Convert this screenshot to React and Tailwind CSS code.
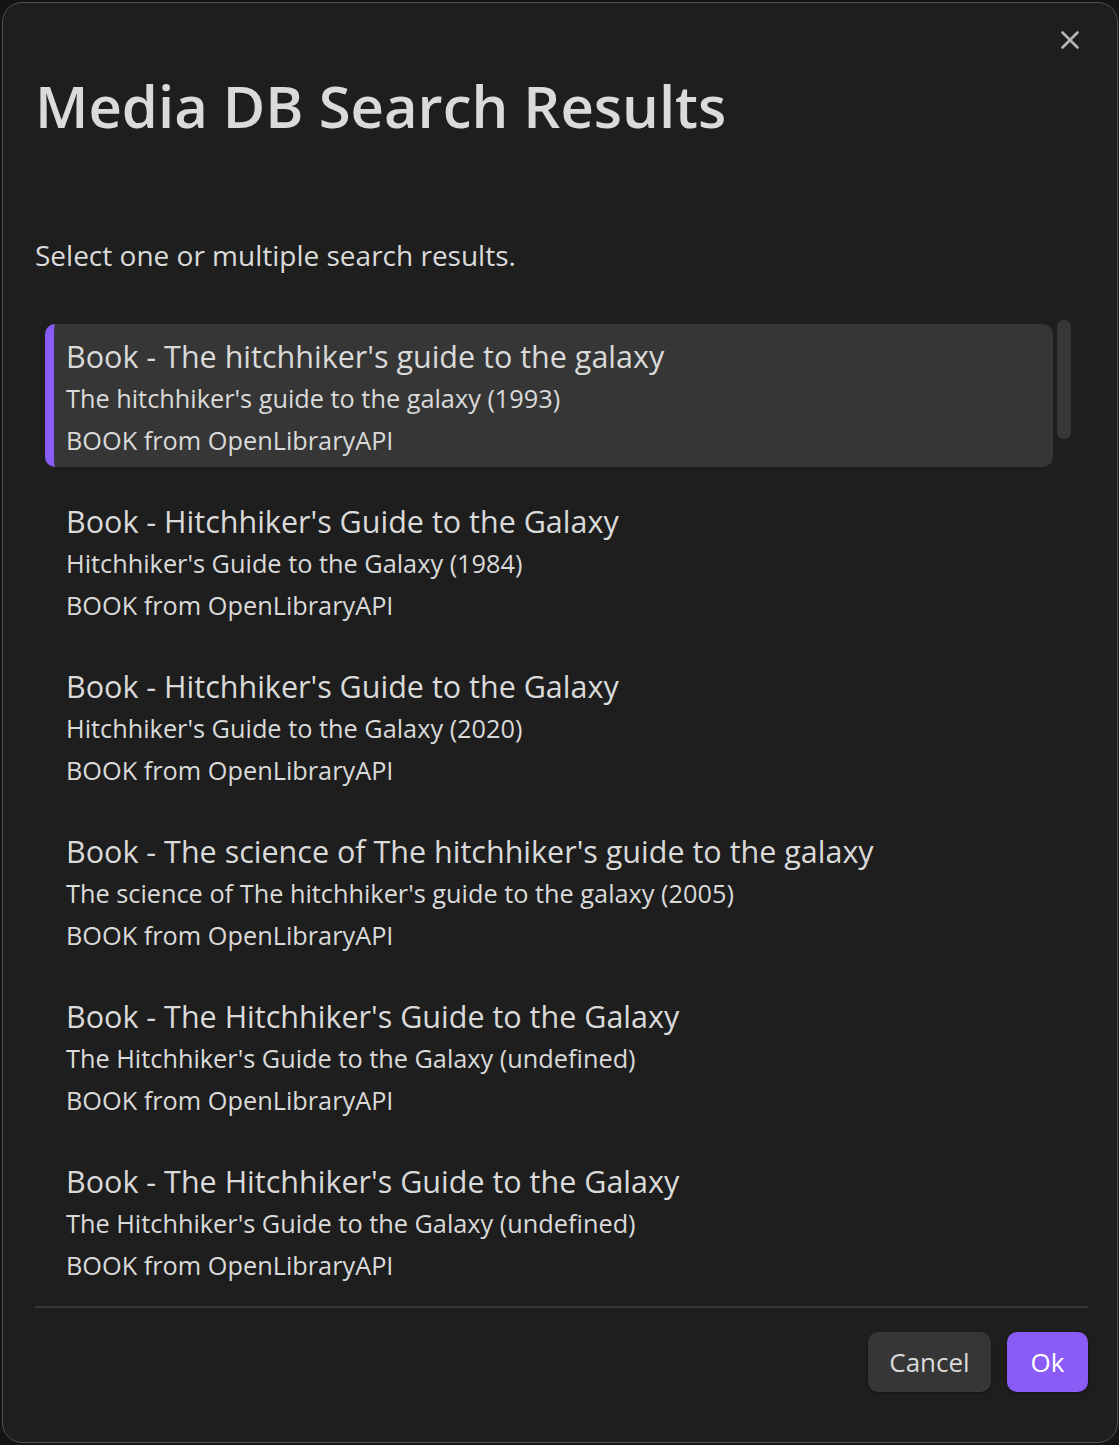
import { X } from "lucide-react";

const RESULTS = [
  {
    title: "Book - The hitchhiker's guide to the galaxy",
    sub: "The hitchhiker's guide to the galaxy (1993)",
    src: "BOOK from OpenLibraryAPI",
  },
  {
    title: "Book - Hitchhiker's Guide to the Galaxy",
    sub: "Hitchhiker's Guide to the Galaxy (1984)",
    src: "BOOK from OpenLibraryAPI",
  },
  {
    title: "Book - Hitchhiker's Guide to the Galaxy",
    sub: "Hitchhiker's Guide to the Galaxy (2020)",
    src: "BOOK from OpenLibraryAPI",
  },
  {
    title: "Book - The science of The hitchhiker's guide to the galaxy",
    sub: "The science of The hitchhiker's guide to the galaxy (2005)",
    src: "BOOK from OpenLibraryAPI",
  },
  {
    title: "Book - The Hitchhiker's Guide to the Galaxy",
    sub: "The Hitchhiker's Guide to the Galaxy (undefined)",
    src: "BOOK from OpenLibraryAPI",
  },
  {
    title: "Book - The Hitchhiker's Guide to the Galaxy",
    sub: "The Hitchhiker's Guide to the Galaxy (undefined)",
    src: "BOOK from OpenLibraryAPI",
  },
];

function ResultItem({ item, selected }) {
  return (
    <div
      className={`flex h-[143px] shrink-0 flex-col justify-center rounded-[10px] pt-[4px] ${
        selected ? "border-l-[9px] border-[#8a5cf5] bg-[#363636] pl-[12px]" : "pl-[21px]"
      }`}
    >
      <div className="text-[30.5px] leading-[42px] text-[#dadada]">{item.title}</div>
      <div className="text-[25.3px] leading-[42px] text-[#dadada]">{item.sub}</div>
      <div className="text-[25.3px] leading-[42px] text-[#dadada]">{item.src}</div>
    </div>
  );
}

export default function App() {
  return (
    <div className="h-[1445px] w-[1119px] bg-[#141414] pl-[2px] pt-[2px] font-['Open_Sans',sans-serif]">
      <div className="relative flex h-[1441px] w-[1116px] flex-col rounded-[20px] border border-[#505050] bg-[#1e1e1e]">
        <button className="absolute right-[32px] top-[22px] text-[#b3b3b3]">
          <X size={30} strokeWidth={2.2} />
        </button>

        <h1 className="ml-[32px] mt-[63px] text-[58px] font-semibold leading-[80px] text-[#dadada]">
          Media DB Search Results
        </h1>

        <p className="ml-[32px] mt-[89px] text-[28px] leading-[40px] text-[#dadada]">
          Select one or multiple search results.
        </p>

        <div className="ml-[42px] mt-[45px] flex h-[975px] gap-[4px]">
          <div className="flex w-[1008px] flex-col gap-[22px] overflow-hidden pt-[4px]">
            {RESULTS.map((item, i) => (
              <ResultItem key={i} item={item} selected={i === 0} />
            ))}
          </div>
          <div className="h-[119px] w-[14px] rounded-full bg-[#363636]" />
        </div>

        <div className="ml-[32px] mr-[29px] mt-[11px] flex justify-end gap-[16px] border-t-2 border-[#363636] pt-[24px]">
          <button className="h-[60px] w-[123px] rounded-[10px] bg-[#363636] text-[26px] text-[#dadada] shadow-[0_1px_3px_rgba(0,0,0,0.4)]">
            Cancel
          </button>
          <button className="h-[60px] w-[81px] rounded-[10px] bg-[#8a5cf5] text-[26px] text-white shadow-[0_1px_3px_rgba(0,0,0,0.4)]">
            Ok
          </button>
        </div>
      </div>
    </div>
  );
}
